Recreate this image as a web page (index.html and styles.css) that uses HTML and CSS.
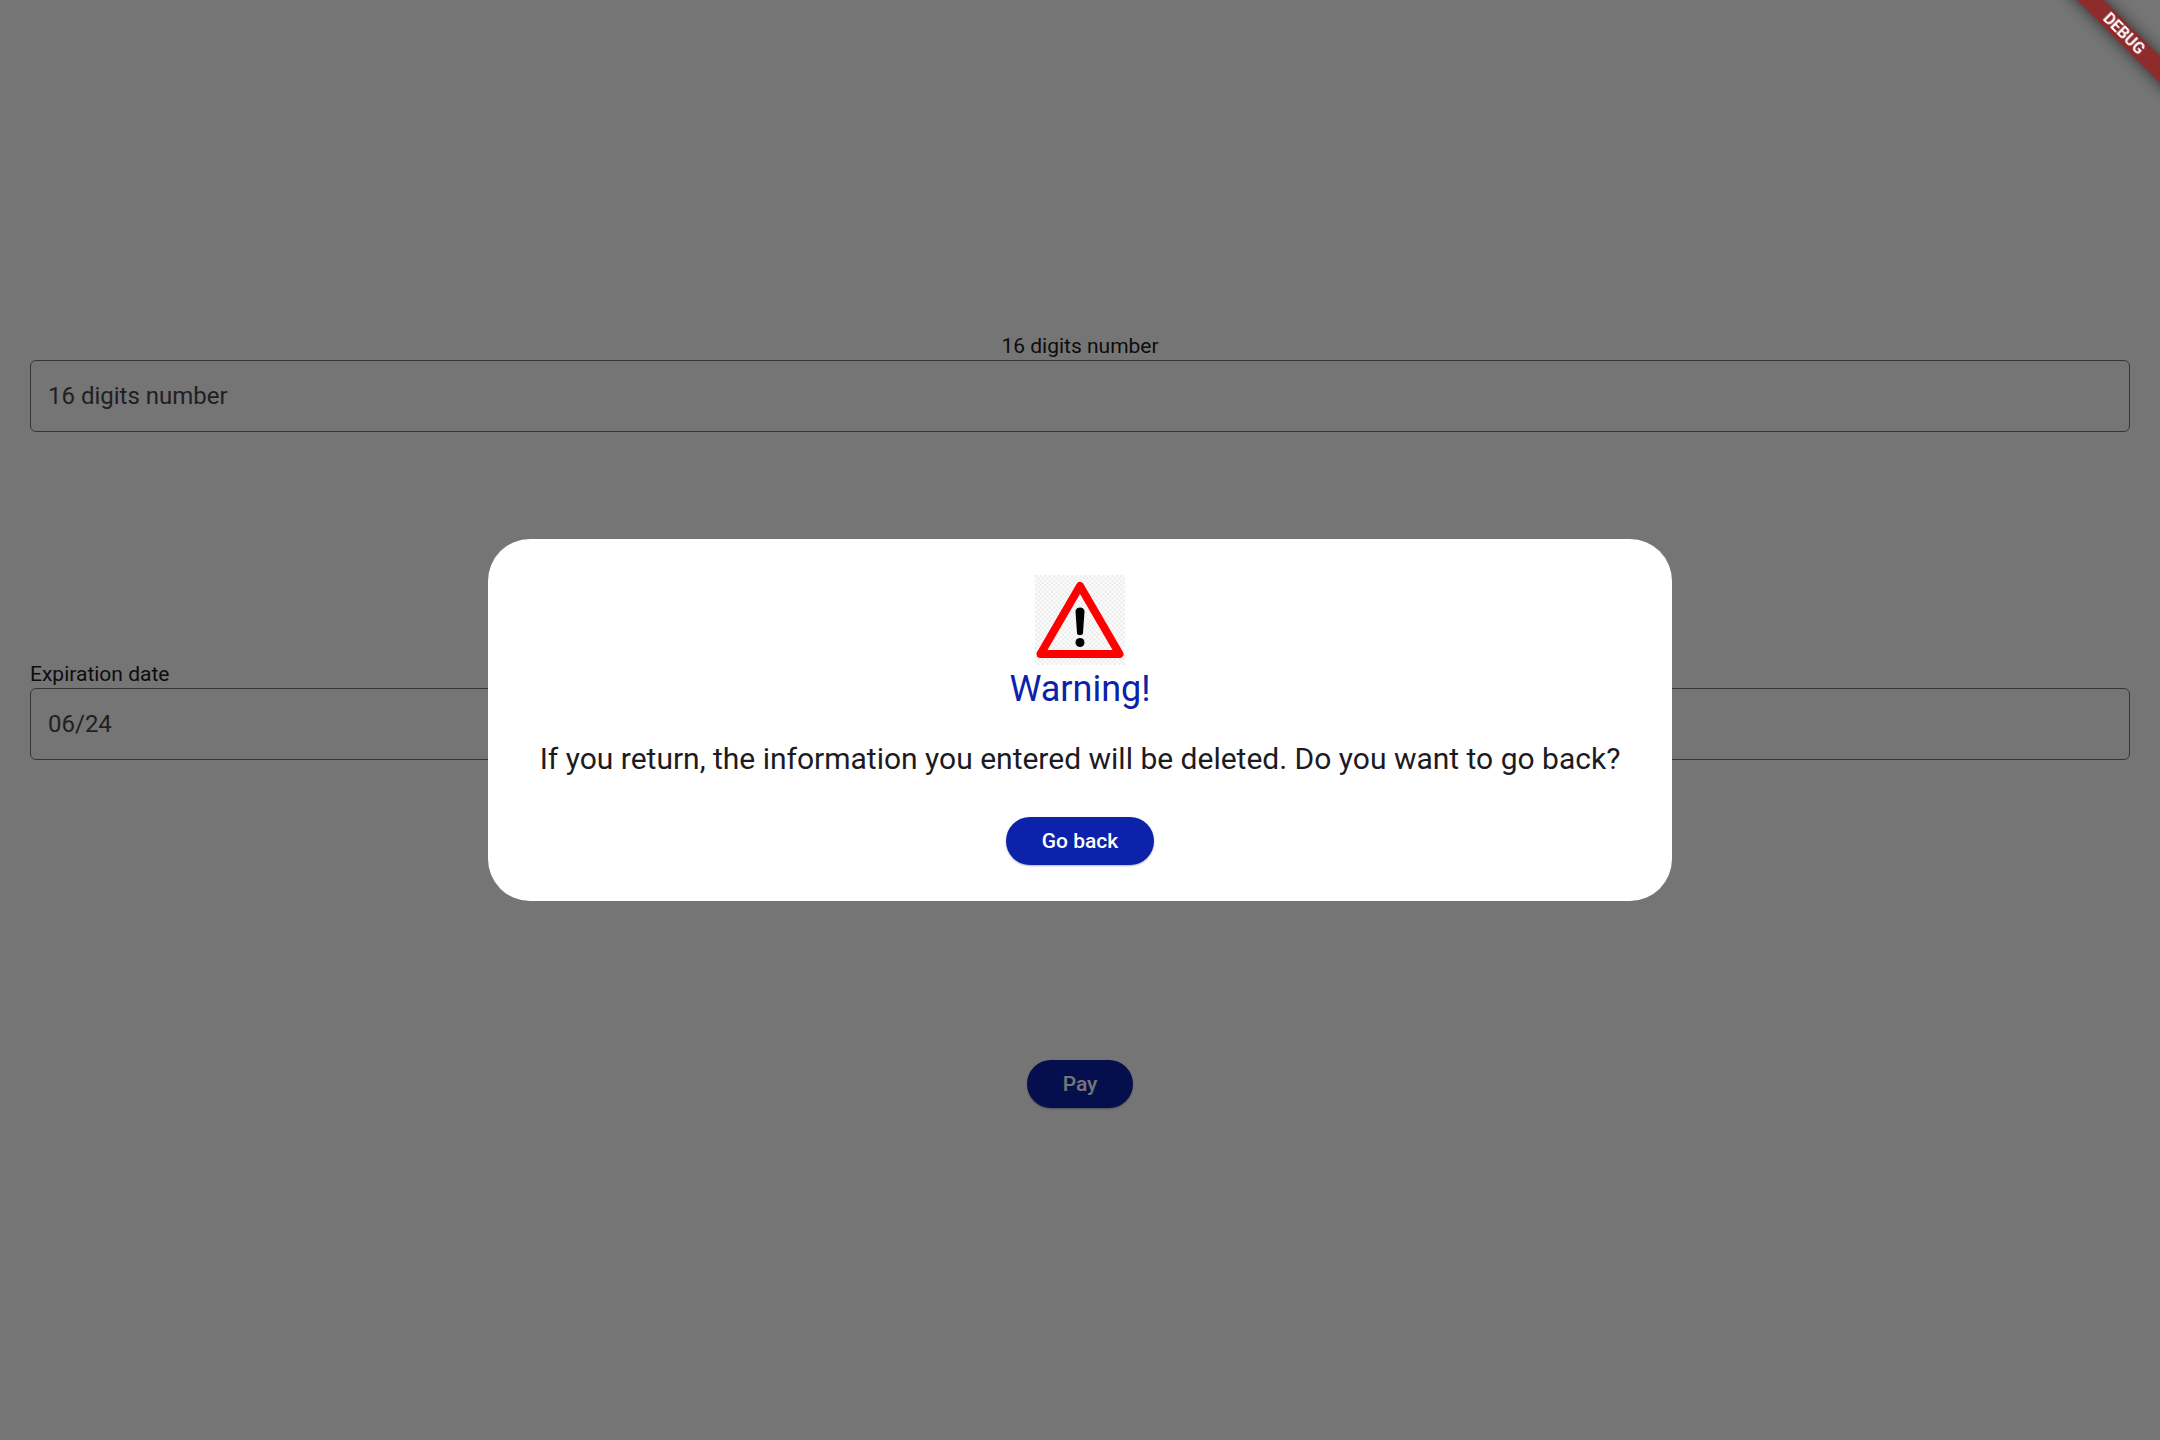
FILE: index.html
```html
<!DOCTYPE html>
<html lang="en">
<head>
<meta charset="utf-8">
<meta name="viewport" content="width=device-width, initial-scale=1">
<title>Payment</title>
<link rel="stylesheet" href="styles.css">
</head>
<body>
<main>
  <form class="payment">
    <div class="field">
      <label class="field-label field-label-center" for="card">16 digits number</label>
      <input class="field-input" id="card" type="text" inputmode="numeric" placeholder="16 digits number">
    </div>
    <div class="field field-date">
      <label class="field-label" for="expiration">Expiration date</label>
      <input class="field-input" id="expiration" type="text" placeholder="06/24">
    </div>
    <button class="button" type="button">Pay</button>
  </form>
</main>
<div class="overlay">
  <dialog class="dialog" open aria-labelledby="dialog-title">
    <svg class="dialog-icon" viewBox="0 0 90 90" aria-hidden="true">
      <defs>
        <pattern id="checks" width="4.500" height="4.500" patternUnits="userSpaceOnUse">
          <path d="M0 0h2.250v2.250H0zM2.250 2.250h2.250v2.250H2.250z" fill="#ebebeb"/>
        </pattern>
      </defs>
      <rect width="90" height="90" fill="url(#checks)"/>
      <path d="M45 11 84.500 79H5.500Z" fill="none" stroke="#f00" stroke-width="8" stroke-linejoin="round"/>
      <path d="M40.500 36.500c0-5.500 9-5.500 9 0L48 58c-.3 3-5.700 3-6 0Z"/>
      <circle cx="45" cy="67.500" r="4.500"/>
    </svg>
    <h1 class="dialog-title" id="dialog-title">Warning!</h1>
    <p class="dialog-text">If you return, the information you entered will be deleted. Do you want to go back?</p>
    <button class="button" type="button">Go back</button>
  </dialog>
</div>
<div class="corner"><span class="ribbon">DEBUG</span></div>
</body>
</html>
```
FILE: styles.css
```css
* {
  box-sizing: border-box;
}

body {
  margin: 0;
  background: #fff;
  color: #1c1b1f;
  font-family: Roboto, sans-serif;
}

.payment {
  display: flex;
  flex-direction: column;
  align-items: center;
  justify-content: center;
  min-height: 100vh;
  padding: 0 30px;
}

.field {
  display: flex;
  flex-direction: column;
  width: 100%;
}

.field-date {
  margin: 228px 0 300px;
}

.field-label {
  font-size: 21px;
  line-height: 28px;
}

.field-label-center {
  text-align: center;
}

.field-input {
  width: 100%;
  height: 72px;
  padding: 0 17px;
  border: 1px solid #79747e;
  border-radius: 6px;
  background: transparent;
  color: #1c1b1f;
  font: 24px Roboto, sans-serif;
}

.field-input::placeholder {
  color: #49454f;
  opacity: 1;
}

.button {
  height: 48px;
  padding: 0 36px;
  border: 0;
  border-radius: 24px;
  background: #0c22aa;
  box-shadow: 0 1px 2px rgba(0, 0, 0, .3);
  color: #fff;
  font: 500 21px Roboto, sans-serif;
}

.overlay {
  position: fixed;
  inset: 0;
  display: flex;
  align-items: center;
  justify-content: center;
  background: rgba(0, 0, 0, .54);
}

.dialog {
  position: static;
  display: flex;
  flex-direction: column;
  align-items: center;
  margin: 0;
  padding: 36px 52px;
  border: 0;
  border-radius: 42px;
  background: #fff;
  color: #1c1b1f;
}

.dialog-icon {
  width: 90px;
  height: 90px;
}

.dialog-title {
  margin: 0;
  color: #0c22aa;
  font-size: 36px;
  font-weight: 400;
  line-height: 48px;
}

.dialog-text {
  margin: 24px 0 36px;
  font-size: 30px;
  line-height: 44px;
}

.corner {
  position: fixed;
  top: 0;
  right: 0;
  width: 120px;
  height: 120px;
  overflow: hidden;
  pointer-events: none;
}

.ribbon {
  position: absolute;
  top: 24px;
  right: -44px;
  width: 160px;
  background: #8d2b2d;
  box-shadow: 0 0 16px rgba(0, 0, 0, .6);
  color: #fff;
  font-size: 16px;
  font-weight: 700;
  line-height: 19px;
  text-align: center;
  transform: rotate(45deg);
}
```
